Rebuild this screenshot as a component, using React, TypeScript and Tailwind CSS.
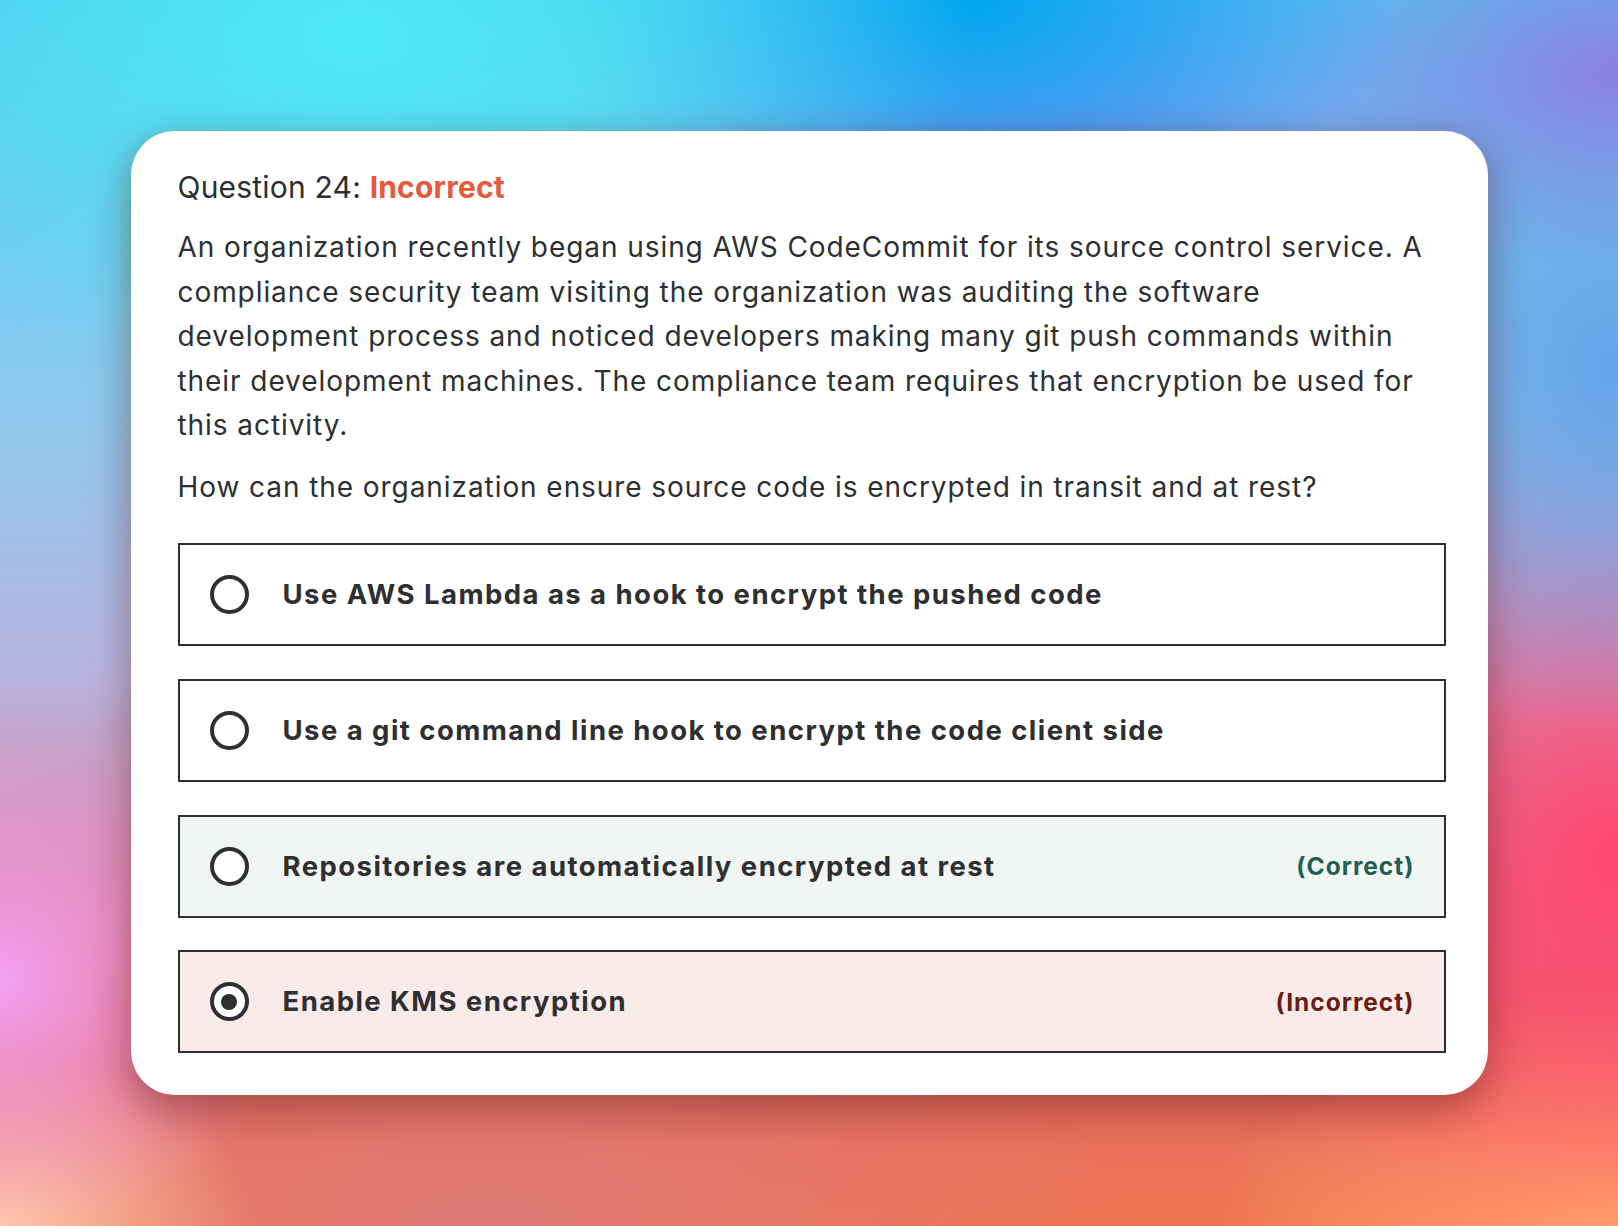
import React from "react";

type Option = {
  text: string;
  state?: "correct" | "incorrect";
  selected?: boolean;
};

const options: Option[] = [
  { text: "Use AWS Lambda as a hook to encrypt the pushed code" },
  { text: "Use a git command line hook to encrypt the code client side" },
  { text: "Repositories are automatically encrypted at rest", state: "correct" },
  { text: "Enable KMS encryption", state: "incorrect", selected: true },
];

function Radio({ selected }: { selected?: boolean }) {
  return (
    <span className="flex h-[39px] w-[39px] shrink-0 items-center justify-center rounded-full border-[4px] border-[#2d2f31] bg-white">
      {selected && <span className="h-[16px] w-[16px] rounded-full bg-[#2d2f31]" />}
    </span>
  );
}

function OptionRow({ o }: { o: Option }) {
  const bg =
    o.state === "correct"
      ? "bg-[#f1f5f4]"
      : o.state === "incorrect"
      ? "bg-[#f9ebea]"
      : "bg-white";
  return (
    <div className={`flex h-[103px] items-center border-2 border-[#2d2f31] pl-[30px] pr-[29px] ${bg}`}>
      <Radio selected={o.selected} />
      <span className="ml-[34px] whitespace-nowrap text-[27.5px] font-bold tracking-[1.45px] text-[#2d2f31]">
        {o.text}
      </span>
      {o.state === "correct" && (
        <span className="ml-auto text-[24.5px] font-bold tracking-[1px] text-[#1e6055]">(Correct)</span>
      )}
      {o.state === "incorrect" && (
        <span className="ml-auto text-[24.5px] font-bold tracking-[1px] text-[#6b1d12]">(Incorrect)</span>
      )}
    </div>
  );
}

export default function App() {
  return (
    <div className="flex h-[1226px] w-full items-center justify-center bg-[#7fb0e8] bg-[image:radial-gradient(38%_30%_at_22%_3%,#4eeaf2_0%,transparent_100%),radial-gradient(26%_20%_at_60%_0%,#00a6ef_0%,transparent_100%),radial-gradient(30%_26%_at_64%_15%,#8a86f0_0%,transparent_100%),radial-gradient(22%_16%_at_100%_6%,#8c80e0_0%,transparent_100%),radial-gradient(22%_30%_at_100%_30%,#66a2e8_0%,transparent_100%),radial-gradient(28%_38%_at_100%_70%,#ff466f_0%,transparent_100%),radial-gradient(18%_22%_at_0%_80%,#f2a0f2_0%,transparent_100%),radial-gradient(16%_14%_at_0%_100%,#ffcaa6_0%,transparent_100%),radial-gradient(25%_20%_at_100%_100%,#ffb46a_0%,transparent_100%),radial-gradient(40%_20%_at_30%_100%,#dc7a78_0%,transparent_100%),linear-gradient(180deg,#50c6f0_0%,#8ccaee_32%,#b8b4e0_55%,#e06a72_80%,#ee7450_100%)] font-['Inter','Noto_Sans',sans-serif]">
      <div className="w-[1357px] rounded-[44px] bg-white pb-[42px] pl-[47px] pr-[42px] pt-[38px] text-[#2d2f31] shadow-[0_14px_40px_rgba(90,20,10,0.45)]">
        <h2 className="text-[30px] leading-[36px] tracking-[0.2px]">
          Question 24: <span className="font-bold text-[#e35a3d]">Incorrect</span>
        </h2>
        <p className="mt-[20.5px] whitespace-nowrap text-[28px] leading-[44.6px] tracking-[0.93px]">
          An organization recently began using AWS CodeCommit for its source control service. A
          <br />
          compliance security team visiting the organization was auditing the software
          <br />
          development process and noticed developers making many git push commands within
          <br />
          their development machines. The compliance team requires that encryption be used for
          <br />
          this activity.
        </p>
        <p className="mt-[16.7px] text-[28px] leading-[44.6px] tracking-[0.93px]">
          How can the organization ensure source code is encrypted in transit and at rest?
        </p>
        <div className="mt-[33.8px] flex flex-col gap-[32.8px]">
          {options.map((o) => (
            <OptionRow key={o.text} o={o} />
          ))}
        </div>
      </div>
    </div>
  );
}
